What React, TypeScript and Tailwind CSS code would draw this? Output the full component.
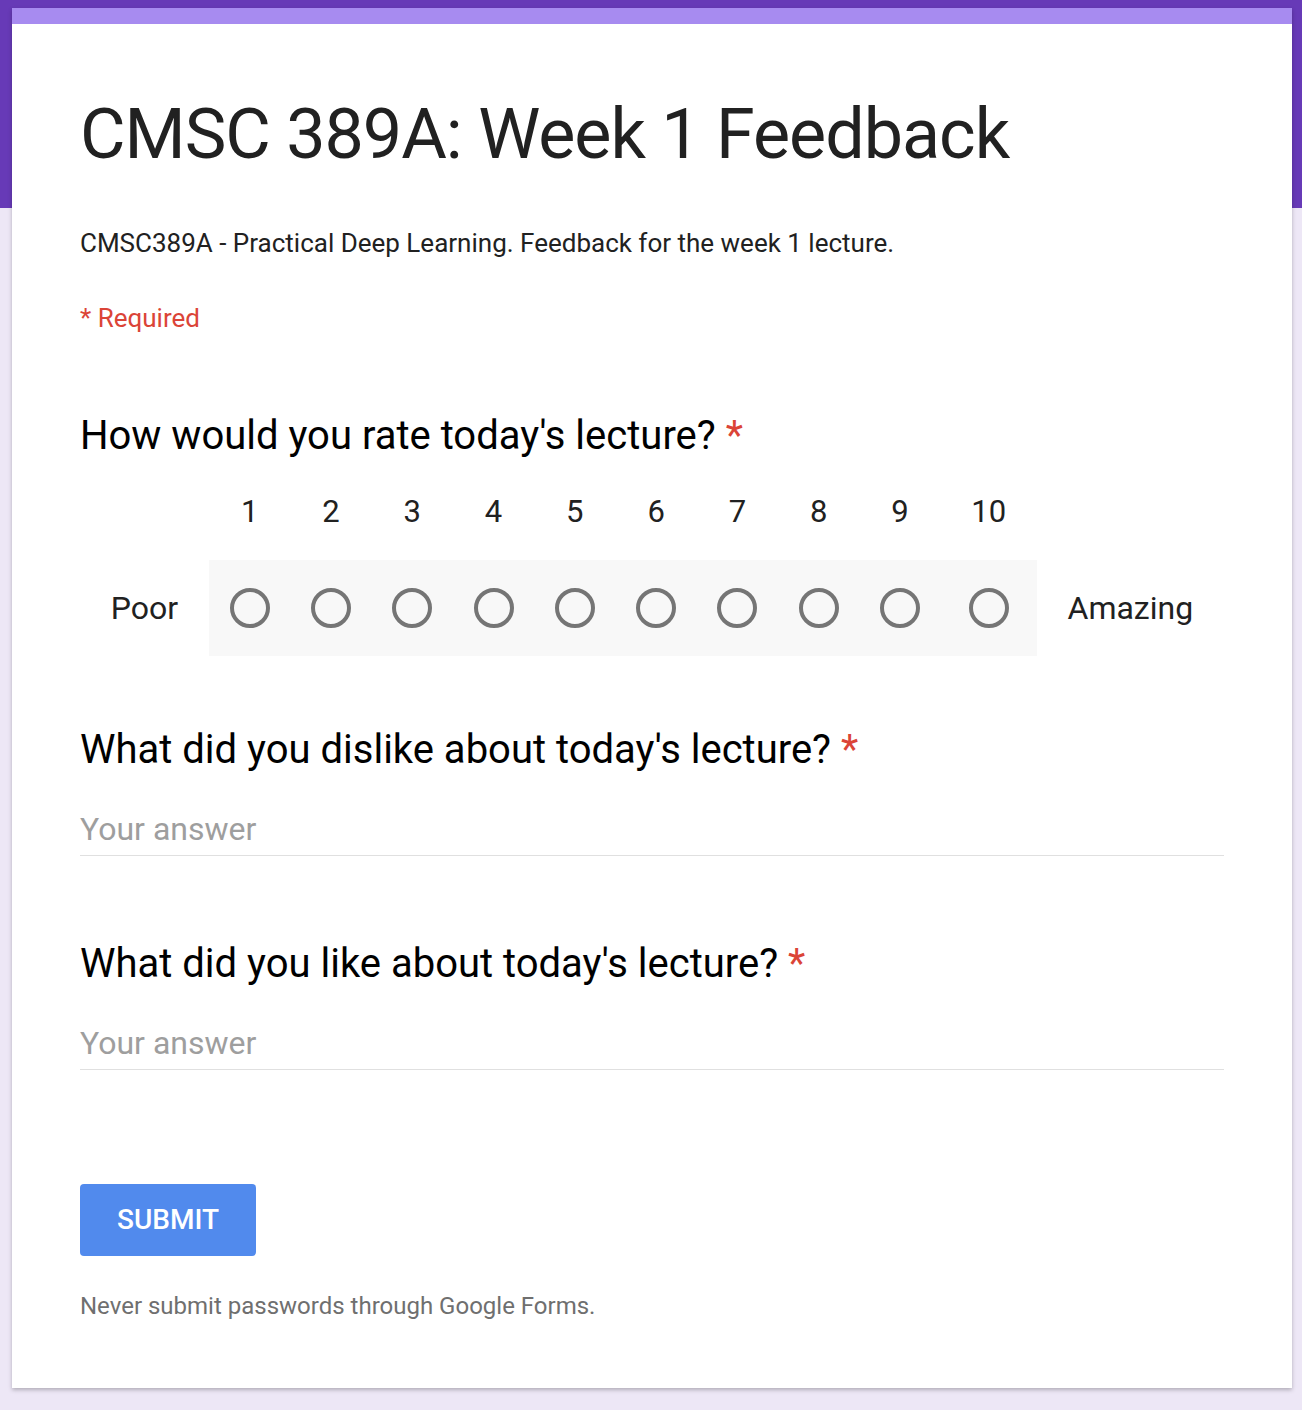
import React from "react";

const SCALE = [1, 2, 3, 4, 5, 6, 7, 8, 9, 10];

const Star = () => <span className="ml-[10px] text-[#db4437]">*</span>;

const TextQuestion = ({ title }: { title: string }) => (
  <div>
    <h2 className="text-[40px] leading-[48px] text-black">
      {title}
      <Star />
    </h2>
    <div className="mt-[24px] h-[58px] border-b border-[#e0e0e0] flex items-end pb-[6px]">
      <span className="text-[32px] leading-[40px] text-[#9e9e9e]">Your answer</span>
    </div>
  </div>
);

export default function App() {
  return (
    <div
      className="min-h-[1410px] w-full pt-[8px] bg-[linear-gradient(to_bottom,#673ab7_0px,#673ab7_208px,#ede7f6_208px)]"
      style={{ fontFamily: "Roboto, 'Noto Sans', sans-serif" }}
    >
      <div className="mx-[12px] w-[1280px] bg-white border-t-[16px] border-[#a78bf0] shadow-[0_2px_4px_rgba(0,0,0,0.25)] px-[68px] pt-[68px] pb-[68px]">
        {/* Header */}
        <h1 className="text-[70px] leading-[84px] text-[#212121] tracking-[-1px]">CMSC 389A: Week 1 Feedback</h1>
        <p className="mt-[51px] text-[26px] leading-[32px] text-[#212121]">
          CMSC389A - Practical Deep Learning. Feedback for the week 1 lecture.
        </p>
        <p className="mt-[43px] text-[26px] leading-[32px] text-[#db4437]">* Required</p>

        {/* Rating question */}
        <div className="mt-[78px]">
          <h2 className="text-[40px] leading-[48px] text-black">
            How would you rate today's lecture?
            <Star />
          </h2>
          <div className="mt-[4px] flex h-[96px] items-center">
            <div className="w-[129px]" />
            {SCALE.map((n) => (
              <div key={n} className={`${n === 10 ? "w-[96px]" : "w-[81.3px]"} text-center text-[31px] text-[#212121]`}>
                {n}
              </div>
            ))}
          </div>
          <div className="flex h-[96px] items-center">
            <div className="w-[129px] text-center text-[32px] text-[#212121]">Poor</div>
            <div className="flex h-full items-center bg-[#f8f8f8]">
              {SCALE.map((n) => (
                <div key={n} className={`${n === 10 ? "w-[96px]" : "w-[81.3px]"} flex justify-center`}>
                  <div className="h-[40px] w-[40px] rounded-full border-[4px] border-[#757575]" />
                </div>
              ))}
            </div>
            <div className="flex-1 text-center text-[32px] text-[#212121]">Amazing</div>
          </div>
        </div>

        <div className="mt-[70px]">
          <TextQuestion title="What did you dislike about today's lecture?" />
        </div>
        <div className="mt-[84px]">
          <TextQuestion title="What did you like about today's lecture?" />
        </div>

        <button className="mt-[114px] h-[72px] w-[176px] rounded-[4px] bg-[#518aed] text-[28px] font-medium text-white">
          SUBMIT
        </button>
        <p className="mt-[36px] text-[24px] leading-[28px] text-[#6f6f6f]">Never submit passwords through Google Forms.</p>
      </div>
    </div>
  );
}
